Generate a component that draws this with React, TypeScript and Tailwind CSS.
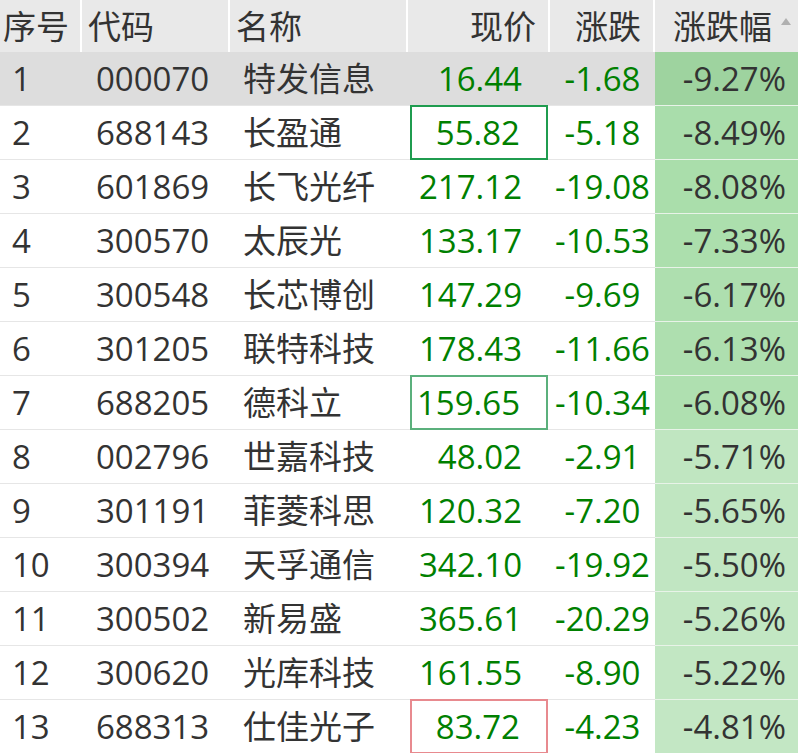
import React from 'react';

interface Stock {
  no: number;
  code: string;
  name: string;
  price: string;
  change: string;
  pct: string;
  pctBg: string;
  box?: 'green' | 'lightgreen' | 'red';
}

const stocks: Stock[] = [
  { no: 1, code: '000070', name: '特发信息', price: '16.44', change: '-1.68', pct: '-9.27%', pctBg: 'bg-[#9ed39f]' },
  { no: 2, code: '688143', name: '长盈通', price: '55.82', change: '-5.18', pct: '-8.49%', pctBg: 'bg-[#a9ddab]', box: 'green' },
  { no: 3, code: '601869', name: '长飞光纤', price: '217.12', change: '-19.08', pct: '-8.08%', pctBg: 'bg-[#aadeab]' },
  { no: 4, code: '300570', name: '太辰光', price: '133.17', change: '-10.53', pct: '-7.33%', pctBg: 'bg-[#acdfad]' },
  { no: 5, code: '300548', name: '长芯博创', price: '147.29', change: '-9.69', pct: '-6.17%', pctBg: 'bg-[#aedfaf]' },
  { no: 6, code: '301205', name: '联特科技', price: '178.43', change: '-11.66', pct: '-6.13%', pctBg: 'bg-[#aedfaf]' },
  { no: 7, code: '688205', name: '德科立', price: '159.65', change: '-10.34', pct: '-6.08%', pctBg: 'bg-[#afe0b0]', box: 'lightgreen' },
  { no: 8, code: '002796', name: '世嘉科技', price: '48.02', change: '-2.91', pct: '-5.71%', pctBg: 'bg-[#c0e6c1]' },
  { no: 9, code: '301191', name: '菲菱科思', price: '120.32', change: '-7.20', pct: '-5.65%', pctBg: 'bg-[#c0e6c1]' },
  { no: 10, code: '300394', name: '天孚通信', price: '342.10', change: '-19.92', pct: '-5.50%', pctBg: 'bg-[#c1e6c2]' },
  { no: 11, code: '300502', name: '新易盛', price: '365.61', change: '-20.29', pct: '-5.26%', pctBg: 'bg-[#c2e7c3]' },
  { no: 12, code: '300620', name: '光库科技', price: '161.55', change: '-8.90', pct: '-5.22%', pctBg: 'bg-[#c2e7c3]' },
  { no: 13, code: '688313', name: '仕佳光子', price: '83.72', change: '-4.23', pct: '-4.81%', pctBg: 'bg-[#c3e7c4]', box: 'red' },
];

const boxBorder = {
  green: 'border-[#1f9c4f]',
  lightgreen: 'border-[#5bb07c]',
  red: 'border-[#e88a8f]',
};

export default function App() {
  return (
    <div
      className="w-[798px] h-[753px] overflow-hidden bg-white text-[33px] leading-none text-[#333]"
      style={{ fontFamily: '"Open Sans", "Noto Sans CJK SC", sans-serif' }}
    >
      {/* Header */}
      <div className="grid grid-cols-[82px_148px_178px_142px_105px_143px] h-[52px] bg-[#e9e9e9]">
        <div className="flex items-center pl-[3px] border-r-2 border-white">序号</div>
        <div className="flex items-center pl-[6px] border-r-2 border-white">代码</div>
        <div className="flex items-center pl-[6px] border-r-2 border-white">名称</div>
        <div className="flex items-center justify-end pr-[12px] border-r-2 border-white">现价</div>
        <div className="flex items-center justify-end pr-[12px] border-r-2 border-white">涨跌</div>
        <div className="flex items-center justify-end pr-[7px] gap-[9px]">
          <span>涨跌幅</span>
          <svg width="10" height="7" viewBox="0 0 10 7" className="mb-[9px]">
            <polygon points="5,0 10,7 0,7" fill="#b0b0b0" />
          </svg>
        </div>
      </div>

      {/* Rows */}
      {stocks.map((s) => {
        const rowBg = s.no === 1 ? 'bg-[#dddddd]' : 'bg-white';
        return (
          <div
            key={s.no}
            className="grid grid-cols-[82px_148px_178px_142px_105px_143px] h-[54px]"
          >
            <div className={`flex items-center pl-[12px] border-b border-[#e6e6e6] ${rowBg}`}>{s.no}</div>
            <div className={`flex items-center pl-[14px] border-b border-[#e6e6e6] ${rowBg}`}>{s.code}</div>
            <div className={`flex items-center pl-[13px] border-b border-[#e6e6e6] ${rowBg}`}>{s.name}</div>
            <div className={`flex items-stretch border-b border-[#e6e6e6] ${rowBg}`}>
              {s.box ? (
                <div
                  className={`flex flex-1 items-center justify-end pr-[26px] mx-[2px] my-[-1px] border-2 ${boxBorder[s.box]} text-[#008000]`}
                >
                  {s.price}
                </div>
              ) : (
                <div className="flex flex-1 items-center justify-end pr-[28px] text-[#008000]">{s.price}</div>
              )}
            </div>
            <div className={`flex items-center justify-center border-b border-[#e6e6e6] text-[#008000] ${rowBg}`}>
              {s.change}
            </div>
            <div className={`flex items-center justify-end pr-[12px] border-b border-[#e8f3e8] ${s.pctBg}`}>
              {s.pct}
            </div>
          </div>
        );
      })}
    </div>
  );
}
